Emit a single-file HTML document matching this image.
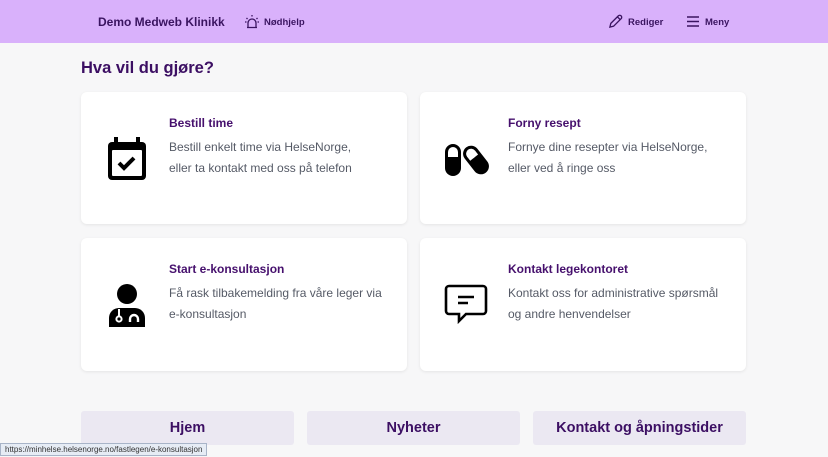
<!DOCTYPE html>
<html><head><meta charset="utf-8"><style>
*{margin:0;padding:0;box-sizing:border-box}
body{width:828px;height:457px;overflow:hidden;background:#f7f7f8;font-family:"Liberation Sans",sans-serif;position:relative}
.hdr{position:absolute;left:0;top:0;width:828px;height:43px;background:#d9b1fb}
.hdr .t{position:absolute;left:98px;top:15px;font-size:12px;font-weight:bold;color:#3a1460}
.hdr .n{position:absolute;font-size:9.5px;font-weight:bold;color:#3a1460;top:17px}
h1{position:absolute;left:81px;top:59px;font-size:16.5px;color:#3c0f63}
.card{position:absolute;width:326px;height:132px;background:#fff;border-radius:6px;box-shadow:0 1px 3px rgba(0,0,0,.08)}
.card .ti{position:absolute;left:88px;top:24px;font-size:12px;font-weight:bold;color:#46106d}
.card .tx{position:absolute;left:88px;top:45px;font-size:12px;line-height:21px;color:#555a66}
.card svg{position:absolute;left:24px;top:44px}
.btn{position:absolute;top:411px;width:213px;height:34px;background:#ebe8f2;border-radius:3px;text-align:center;line-height:34px;font-size:14.5px;font-weight:bold;color:#3c0f63}
.st{position:absolute;left:0;top:443px;height:13px;padding:0 4px;background:#e6ecf5;border:1px solid #a8b4c8;font-size:8px;line-height:11px;color:#333}
</style></head><body>
<div class="hdr">
<div class="t">Demo Medweb Klinikk</div>
<svg style="position:absolute;left:244px;top:14px" width="16" height="16" viewBox="0 0 16 16" fill="none" stroke="#3a1460" stroke-width="1.3"><path d="M4 13V9a4 4 0 0 1 8 0v4M3 13.5h10M8 1v1.5M2.5 4l1 1M13.5 4l-1 1M1 8h1.5M15 8h-1.5"/></svg>
<div class="n" style="left:264px">Nødhjelp</div>
<svg style="position:absolute;left:608px;top:14px" width="15" height="15" viewBox="0 0 16 16" fill="none" stroke="#3a1460" stroke-width="1.4"><path d="M2 14l1-4 8-8a2 2 0 0 1 3 3l-8 8z M10 3l3 3"/></svg>
<div class="n" style="left:628px">Rediger</div>
<svg style="position:absolute;left:686px;top:15px" width="14" height="13" viewBox="0 0 14 13" stroke="#3a1460" stroke-width="1.6"><path d="M1 2h12M1 6.5h12M1 11h12"/></svg>
<div class="n" style="left:705px">Meny</div>
</div>
<h1>Hva vil du gjøre?</h1>
<div class="card" style="left:81px;top:92px">
<svg width="44" height="44" viewBox="0 0 44 44"><rect x="3" y="6" width="38" height="38" rx="4" fill="#000"/><rect x="7" y="14" width="30" height="26" rx="1" fill="#fff"/><rect x="9" y="1" width="4" height="8" fill="#000"/><rect x="31" y="1" width="4" height="8" fill="#000"/><path d="M14 27l5 5 10-10" stroke="#000" stroke-width="4" fill="none"/></svg>
<div class="ti">Bestill time</div><div class="tx">Bestill enkelt time via HelseNorge,<br>eller ta kontakt med oss på telefon</div></div>
<div class="card" style="left:420px;top:92px">
<svg width="46" height="44" viewBox="0 0 46 44"><rect x="1" y="8" width="16" height="32" rx="8" fill="#000"/><rect x="4" y="11" width="10" height="10" rx="5" fill="#fff"/><rect x="4" y="16" width="10" height="5" fill="#fff"/><g transform="rotate(-38 32 24)"><rect x="24" y="8" width="16" height="32" rx="8" fill="#000"/><rect x="27" y="11" width="10" height="10" rx="5" fill="#fff"/><rect x="27" y="16" width="10" height="5" fill="#fff"/></g></svg>
<div class="ti">Forny resept</div><div class="tx">Fornye dine resepter via HelseNorge,<br>eller ved å ringe oss</div></div>
<div class="card" style="left:81px;top:238px;height:133px">
<svg width="44" height="46" viewBox="0 0 44 46"><circle cx="22" cy="12" r="10" fill="#000"/><path d="M4 45v-9a10 10 0 0 1 10-10h16a10 10 0 0 1 10 10v9z" fill="#000"/><circle cx="14" cy="37" r="2.6" fill="none" stroke="#fff" stroke-width="2"/><path d="M25 40v-3a4 4 0 0 1 8 0v3" fill="none" stroke="#fff" stroke-width="2.4"/><path d="M14 34v-7" stroke="#fff" stroke-width="2"/></svg>
<div class="ti">Start e-konsultasjon</div><div class="tx">Få rask tilbakemelding fra våre leger via<br>e-konsultasjon</div></div>
<div class="card" style="left:420px;top:238px;height:133px">
<svg width="46" height="46" viewBox="0 0 46 46"><path d="M5 4h34a3 3 0 0 1 3 3v22a3 3 0 0 1-3 3H22l-7 7v-7H5a3 3 0 0 1-3-3V7a3 3 0 0 1 3-3z" fill="none" stroke="#000" stroke-width="2.6"/><path d="M14 15h16M14 21h10" stroke="#000" stroke-width="2.6"/></svg>
<div class="ti">Kontakt legekontoret</div><div class="tx">Kontakt oss for administrative spørsmål<br>og andre henvendelser</div></div>
<div class="btn" style="left:81px">Hjem</div>
<div class="btn" style="left:307px">Nyheter</div>
<div class="btn" style="left:533px">Kontakt og åpningstider</div>
<div class="st">https://minhelse.helsenorge.no/fastlegen/e-konsultasjon</div>
</body></html>
